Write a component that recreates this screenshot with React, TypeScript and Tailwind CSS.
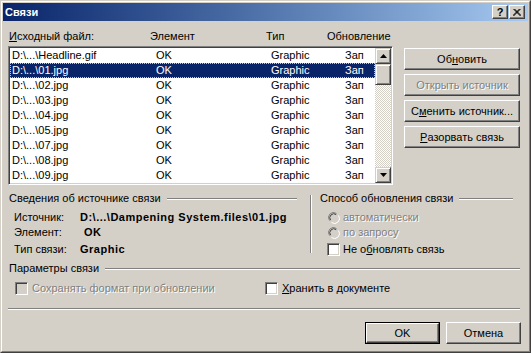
import React from 'react';

const rows = ['Headline.gif', '01.jpg', '02.jpg', '03.jpg', '04.jpg', '05.jpg', '07.jpg', '08.jpg', '09.jpg'];

function Etched({ className = '' }: { className?: string }) {
  return <div className={`h-[2px] border-t border-t-[#808080] border-b border-b-white ${className}`} />;
}

function Button({ children, disabled, isDefault, className = '' }: { children: React.ReactNode; disabled?: boolean; isDefault?: boolean; className?: string }) {
  const face = (
    <div
      className={`flex h-full w-full items-center justify-center border border-t-white border-l-white border-r-[#404040] border-b-[#404040] shadow-[inset_-1px_-1px_0_#808080] ${
        disabled ? 'text-[#808080] [text-shadow:1px_1px_0_#fff]' : 'text-black'
      }`}
    >
      {children}
    </div>
  );
  if (isDefault) {
    return <div className={`border border-black ${className}`}>{face}</div>;
  }
  return <div className={className}>{face}</div>;
}

function Checkbox({ disabled }: { disabled?: boolean }) {
  return (
    <div
      className={`h-[13px] w-[13px] shrink-0 border border-t-[#808080] border-l-[#808080] border-r-white border-b-white shadow-[inset_1px_1px_0_#404040,inset_-1px_-1px_0_#d4d0c8] ${
        disabled ? 'bg-[#d4d0c8]' : 'bg-white'
      }`}
    />
  );
}

function Radio() {
  return (
    <svg width="12" height="12" viewBox="0 0 12 12" className="shrink-0">
      <circle cx="6" cy="6" r="5" fill="#d4d0c8" />
      <path d="M1.5 8.5 A5 5 0 0 1 8.5 1.5" fill="none" stroke="#808080" strokeWidth="1" />
      <path d="M2.6 8.2 A4 4 0 0 1 8.2 2.6" fill="none" stroke="#404040" strokeWidth="1" />
      <path d="M10.5 3.5 A5 5 0 0 1 3.5 10.5" fill="none" stroke="#ffffff" strokeWidth="1" />
    </svg>
  );
}

function Arrow({ up }: { up?: boolean }) {
  return (
    <svg width="7" height="4" viewBox="0 0 7 4">
      <path d={up ? 'M3.5 0 L7 4 L0 4 Z' : 'M0 0 L7 0 L3.5 4 Z'} fill="#000" />
    </svg>
  );
}

export default function App() {
  return (
    <div className="w-[531px] h-[353px] bg-[#d4d0c8] border border-t-[#d4d0c8] border-l-[#d4d0c8] border-r-[#404040] border-b-[#404040] font-['Liberation_Sans',Arial,sans-serif] text-[11px] leading-[13px] text-black">
      <div className="h-full border border-t-white border-l-white border-r-[#808080] border-b-[#808080] p-px flex flex-col">
        {/* title bar */}
        <div className="h-[18px] shrink-0 flex items-center bg-gradient-to-r from-[#0a246a] to-[#a6caf0] pl-[2px] pr-[3px]">
          <span className="font-bold text-white">Связи</span>
          <div className="ml-auto flex">
            <div className="flex h-[14px] w-[16px] items-center justify-center bg-[#d4d0c8] border border-t-white border-l-white border-r-[#404040] border-b-[#404040] shadow-[inset_-1px_-1px_0_#808080] text-[11px] font-bold leading-none">
              ?
            </div>
            <div className="ml-px flex h-[14px] w-[16px] items-center justify-center bg-[#d4d0c8] border border-t-white border-l-white border-r-[#404040] border-b-[#404040] shadow-[inset_-1px_-1px_0_#808080]">
              <svg width="8" height="7" viewBox="0 0 8 7">
                <path d="M0.5 0 L7.5 7 M1.5 0 L8 6.5 M7.5 0 L0.5 7 M6.5 0 L0 6.5" stroke="#000" strokeWidth="1" />
              </svg>
            </div>
          </div>
        </div>

        {/* column headers */}
        <div className="mt-[9px] h-[13px] flex pl-[6px]">
          <div className="w-[141px]"><u>И</u>сходный файл:</div>
          <div className="w-[116px]">Элемент</div>
          <div className="w-[61px]">Тип</div>
          <div>Обновление</div>
        </div>

        {/* list + buttons */}
        <div className="mt-[3px] flex">
          <div className="ml-[5px] w-[385px] h-[139px] bg-white border border-t-[#808080] border-l-[#808080] border-r-white border-b-white shadow-[inset_1px_1px_0_#404040,inset_-1px_-1px_0_#d4d0c8] p-px flex">
            <div className="flex-1 flex flex-col">
              {rows.map((r, i) => (
                <div
                  key={r}
                  className={`h-[15px] flex items-center pl-[2px] ${
                    i === 1 ? 'bg-[#0a246a] text-white outline-1 outline-dotted outline-[#d8c890] -outline-offset-1' : ''
                  }`}
                >
                  <div className="w-[144px]">D:\...\{r}</div>
                  <div className="w-[115px]">OK</div>
                  <div className="w-[74px]">Graphic</div>
                  <div>Зап</div>
                </div>
              ))}
            </div>
            <div className="w-[16px] flex flex-col bg-[repeating-conic-gradient(#d4d0c8_0%_25%,#ffffff_0%_50%)] bg-[length:2px_2px]">
              <div className="h-[16px] flex items-center justify-center bg-[#d4d0c8] border border-t-[#d4d0c8] border-l-[#d4d0c8] border-r-[#404040] border-b-[#404040] shadow-[inset_1px_1px_0_#fff,inset_-1px_-1px_0_#808080]">
                <Arrow up />
              </div>
              <div className="h-[21px] bg-[#d4d0c8] border border-t-[#d4d0c8] border-l-[#d4d0c8] border-r-[#404040] border-b-[#404040] shadow-[inset_1px_1px_0_#fff,inset_-1px_-1px_0_#808080]" />
              <div className="flex-1" />
              <div className="h-[16px] flex items-center justify-center bg-[#d4d0c8] border border-t-[#d4d0c8] border-l-[#d4d0c8] border-r-[#404040] border-b-[#404040] shadow-[inset_1px_1px_0_#fff,inset_-1px_-1px_0_#808080]">
                <Arrow />
              </div>
            </div>
          </div>
          <div className="ml-[11px] mt-[2px] w-[116px] flex flex-col gap-[4px]">
            <Button className="h-[22px]">Об<u>н</u>овить</Button>
            <Button className="h-[22px]" disabled>Открыть источник</Button>
            <Button className="h-[22px]">С<u>м</u>енить источник...</Button>
            <Button className="h-[22px]"><u>Р</u>азорвать связь</Button>
          </div>
        </div>

        {/* details + update method */}
        <div className="flex">
          <div className="w-[302px] flex flex-col">
            <div className="mt-[7px] h-[13px] flex items-center pl-[6px] mr-[8px]">
              <span>Сведения об источнике связи</span>
              <Etched className="ml-[6px] flex-1" />
            </div>
            <div className="mt-[6px] h-[13px] flex pl-[11px]">
              <div className="w-[66px]">Источник:</div>
              <div className="font-bold tracking-[0.5px]">D:\...\Dampening System.files\01.jpg</div>
            </div>
            <div className="mt-[2px] h-[13px] flex pl-[11px]">
              <div className="w-[66px]">Элемент:</div>
              <div className="pl-[4px] font-bold tracking-[0.5px]">OK</div>
            </div>
            <div className="mt-[4px] h-[13px] flex pl-[11px]">
              <div className="w-[66px]">Тип связи:</div>
              <div className="font-bold tracking-[0.5px]">Graphic</div>
            </div>
          </div>
          <div className="flex-1 flex pl-[5px]">
            <div className="mt-[10px] h-[58px] w-[2px] border-l border-l-[#808080] border-r border-r-white" />
            <div className="flex-1 flex flex-col">
              <div className="mt-[7px] h-[13px] flex items-center pl-[8px] mr-[15px]">
                <span>Способ обновления связи</span>
                <Etched className="ml-[6px] flex-1" />
              </div>
              <div className="mt-[6px] h-[13px] flex items-center pl-[16px] gap-[3px] text-[#808080] [text-shadow:1px_1px_0_#fff]">
                <Radio />
                <span>автоматически</span>
              </div>
              <div className="mt-[2px] h-[13px] flex items-center pl-[16px] gap-[3px] text-[#808080] [text-shadow:1px_1px_0_#fff]">
                <Radio />
                <span>по запросу</span>
              </div>
              <div className="mt-[4px] h-[13px] flex items-center pl-[15px] gap-[3px]">
                <Checkbox />
                <span>Не о<u>б</u>новлять связь</span>
              </div>
            </div>
          </div>
        </div>

        {/* link options */}
        <div className="mt-[6px] h-[13px] flex items-center pl-[6px] mr-[8px]">
          <span>Параметры связи</span>
          <Etched className="ml-[6px] flex-1" />
        </div>
        <div className="mt-[7px] h-[13px] flex items-center">
          <div className="pl-[12px] w-[262px] flex items-center gap-[4px] text-[#808080] [text-shadow:1px_1px_0_#fff]">
            <Checkbox disabled />
            <span>Сохранять формат при обновлении</span>
          </div>
          <div className="flex items-center gap-[4px]">
            <Checkbox />
            <span><u>Х</u>ранить в документе</span>
          </div>
        </div>

        <Etched className="mt-[13px] ml-[5px] mr-[8px]" />

        <div className="mt-[12px] flex justify-end gap-[6px] mr-[7px]">
          <Button isDefault className="w-[75px] h-[22px]">OK</Button>
          <Button className="w-[75px] h-[22px]">Отмена</Button>
        </div>
      </div>
    </div>
  );
}
